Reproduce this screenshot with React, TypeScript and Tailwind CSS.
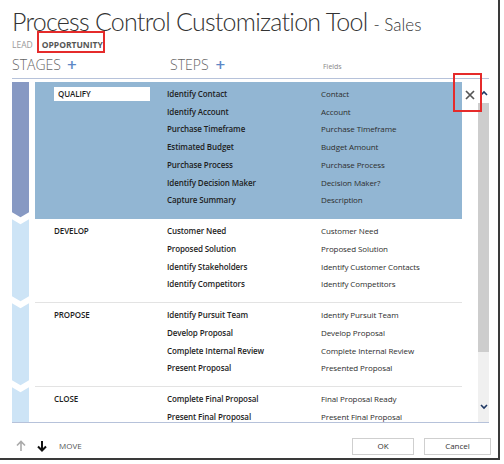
import React from 'react';

type Stage = {
  name: string;
  active?: boolean;
  steps: [string, string][];
};

const stages: Stage[] = [
  {
    name: 'QUALIFY',
    active: true,
    steps: [
      ['Identify Contact', 'Contact'],
      ['Identify Account', 'Account'],
      ['Purchase Timeframe', 'Purchase Timeframe'],
      ['Estimated Budget', 'Budget Amount'],
      ['Purchase Process', 'Purchase Process'],
      ['Identify Decision Maker', 'Decision Maker?'],
      ['Capture Summary', 'Description'],
    ],
  },
  {
    name: 'DEVELOP',
    steps: [
      ['Customer Need', 'Customer Need'],
      ['Proposed Solution', 'Proposed Solution'],
      ['Identify Stakeholders', 'Identify Customer Contacts'],
      ['Identify Competitors', 'Identify Competitors'],
    ],
  },
  {
    name: 'PROPOSE',
    steps: [
      ['Identify Pursuit Team', 'Identify Pursuit Team'],
      ['Develop Proposal', 'Develop Proposal'],
      ['Complete Internal Review', 'Complete Internal Review'],
      ['Present Proposal', 'Presented Proposal'],
    ],
  },
  {
    name: 'CLOSE',
    steps: [
      ['Complete Final Proposal', 'Final Proposal Ready'],
      ['Present Final Proposal', 'Present Final Proposal'],
    ],
  },
];

// stage arrow on the left, pointed at the bottom, notched at the top
const Chevron: React.FC<{ first?: boolean; last?: boolean }> = ({ first, last }) => {
  const cls = first
    ? 'bg-[#8799c3] [clip-path:polygon(0_0,100%_0,100%_calc(100%_-_7px),50%_calc(100%_-_2px),0_calc(100%_-_7px))]'
    : last
    ? 'bg-[#cde4f6] [clip-path:polygon(0_0,50%_5px,100%_0,100%_100%,0_100%)]'
    : 'bg-[#cde4f6] [clip-path:polygon(0_0,50%_5px,100%_0,100%_calc(100%_-_7px),50%_calc(100%_-_2px),0_calc(100%_-_7px))]';
  return <div className={`w-[17px] shrink-0 ${cls}`} />;
};

const StageSection: React.FC<{ stage: Stage; index: number; total: number }> = ({ stage, index, total }) => {
  const first = index === 0;
  const last = index === total - 1;
  return (
    <div className="flex">
      <Chevron first={first} last={last} />
      <div
        className={`ml-[6px] w-[427px] shrink-0 pt-[3px] ${
          stage.active ? 'bg-[#92b6d3] pb-[10px]' : 'pb-[9px] border-b border-[#e3e3e3]'
        } ${last ? 'border-b-0 pb-0' : ''}`}
      >
        {stage.steps.map(([step, field], i) => (
          <div key={step} className="flex h-[17.75px] items-center text-[8px] tracking-[-0.1px] text-[#1e1e1e]">
            <div className="w-[132px] shrink-0 pl-[19px]">
              {i === 0 ? (
                stage.active ? (
                  <div className="flex h-[14px] w-[96px] items-center bg-white pl-[4px] font-semibold">{stage.name}</div>
                ) : (
                  <span className="font-semibold">{stage.name}</span>
                )
              ) : null}
            </div>
            <div className="w-[154px] shrink-0 font-semibold">{step}</div>
            <div className="text-[#2e2e2e]">{field}</div>
          </div>
        ))}
      </div>
    </div>
  );
};

export default function App() {
  return (
    <div className="h-[464px] w-[504px] bg-white font-['Open_Sans',sans-serif]">
      <div className="relative h-[460px] w-[500px] border-b-2 border-r-2 border-[#3a3a3a] px-3">
        {/* title */}
        <div className="flex items-baseline whitespace-nowrap pt-[6px] font-['Lato',sans-serif] leading-[30px] text-[#333]">
          <span className="text-[25px] font-light tracking-[-0.75px]">Process Control Customization Tool</span>
          <span className="ml-[6px] text-[17px] font-light">- Sales</span>
        </div>

        {/* entity tabs */}
        <div className="-mt-[2px] flex h-[14px] items-center text-[8.5px]">
          <span className="text-[#9a9a9a]">LEAD</span>
          <span className="relative ml-[9px] font-bold text-[#555]">
            OPPORTUNITY
            <span className="absolute -left-[5px] -top-[8px] h-[22px] w-[68px] border-2 border-[#e52b2b]" />
          </span>
        </div>

        {/* column headers */}
        <div className="mt-[2px] flex h-[20px] items-center text-[#666]">
          <div className="flex w-[158px] items-center">
            <span className="text-[14px] font-light">STAGES</span>
            <span className="ml-[6px] text-[17px] font-semibold leading-none text-[#5d87c6]">+</span>
          </div>
          <div className="flex w-[153px] items-center">
            <span className="text-[14px] font-light">STEPS</span>
            <span className="ml-[7px] text-[17px] font-semibold leading-none text-[#5d87c6]">+</span>
          </div>
          <span className="mt-[6px] text-[7px] text-[#888]">Fields</span>
        </div>

        {/* grid */}
        <div className="mt-[4px] w-[477px] border-b border-t border-[#b6c2da] pt-[3px]">
          <div className="flex h-[340px]">
            <div className="w-[450px] overflow-hidden">
              {stages.map((s, i) => (
                <StageSection key={s.name} stage={s} index={i} total={stages.length} />
              ))}
            </div>
            <div className="ml-[16px] flex w-[11px] flex-col bg-[#f0f0f0]">
              <div className="flex h-[21px] items-center justify-center bg-white">
                <svg width="8" height="6" viewBox="0 0 8 6">
                  <path d="M1 5 L4 2 L7 5" fill="none" stroke="#1f3864" strokeWidth="1.6" />
                </svg>
              </div>
              <div className="h-[249px] bg-[#cdcdcd]" />
              <div className="flex-1" />
              <div className="flex h-[22px] items-start justify-center pt-[4px]">
                <svg width="8" height="6" viewBox="0 0 8 6">
                  <path d="M1 1 L4 4 L7 1" fill="none" stroke="#1f3864" strokeWidth="1.6" />
                </svg>
              </div>
            </div>
          </div>
        </div>

        {/* close X */}
        <div className="absolute left-[465px] top-[90px]">
          <svg width="10" height="10" viewBox="0 0 10 10">
            <path d="M1 1 L9 9 M9 1 L1 9" stroke="#555" strokeWidth="1.7" />
          </svg>
        </div>
        <div className="absolute left-[453px] top-[73px] h-[39px] w-[29px] border-2 border-[#e52b2b]" />

        {/* footer */}
        <div className="mt-[14px] flex h-[18px] items-center">
          <svg width="10" height="12" viewBox="0 0 10 12" className="ml-[4px]">
            <path d="M5 11 V2 M1 5.5 L5 1.5 L9 5.5" fill="none" stroke="#aaa" strokeWidth="1.6" />
          </svg>
          <svg width="10" height="12" viewBox="0 0 10 12" className="ml-[11px]">
            <path d="M5 1 V10 M1 6.5 L5 10.5 L9 6.5" fill="none" stroke="#111" strokeWidth="2" />
          </svg>
          <span className="ml-[12px] text-[8px] text-[#555]">MOVE</span>
          <div className="ml-auto mr-[-5px] flex gap-[10px]">
            <button className="h-[17px] w-[62px] border border-[#cfcfcf] bg-white text-[8px] text-[#333]">OK</button>
            <button className="h-[17px] w-[67px] border border-[#cfcfcf] bg-white text-[8px] text-[#333]">Cancel</button>
          </div>
        </div>
      </div>
    </div>
  );
}
